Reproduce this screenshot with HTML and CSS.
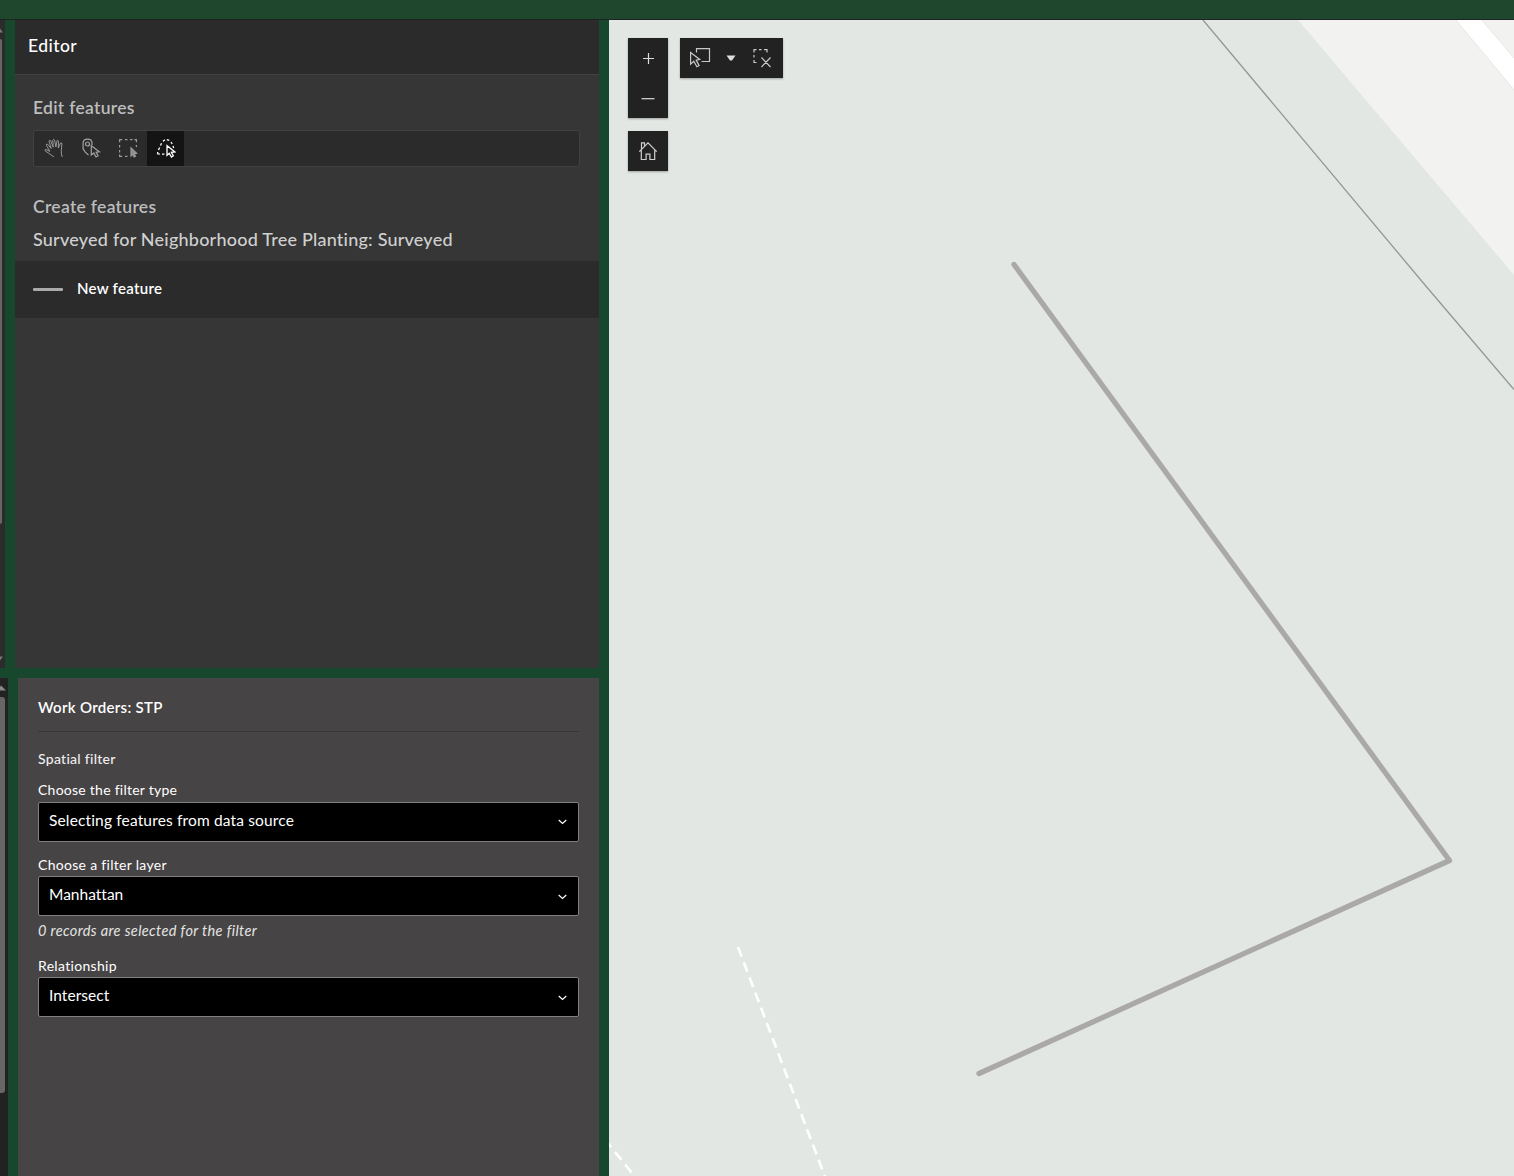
FILE: index.html
```html
<!DOCTYPE html>
<html lang="en">
<head>
<meta charset="utf-8">
<title>Editor</title>
<link rel="stylesheet" href="styles.css">
</head>
<body>
<header class="topbar"></header>
<main class="app">
  <div class="side">
    <div class="row row-top">
      <div class="strip strip-top">
        <svg class="strip-arrow" width="5" height="5" viewBox="0 0 5 5"><path d="M-3 4.500L0 .500L3 4.500z" fill="#777"/></svg>
        <div class="thumb thumb-top"></div>
        <svg class="strip-arrow strip-arrow-end" width="5" height="5" viewBox="0 0 5 5"><path d="M-3 .500L0 4.500L3 .500z" fill="#777"/></svg>
      </div>
      <section class="editor">
        <header class="editor-head"><h1 class="t t-editor">Editor</h1></header>
        <div class="editor-body">
          <h2 class="t t-edit">Edit features</h2>
          <div class="tools">
            <button class="tool" aria-label="Pan"><svg width="20" height="20" viewBox="0 0 20 20" fill="none" stroke="#a3a3a3" stroke-width=".9" stroke-linejoin="round" stroke-linecap="round"><path d="M10.700 18.700L7.900 16.800L2.100 12.800Q1.700 11.200 3.100 11.500L6.800 13.400L3.300 7.200Q3.300 5.600 4.700 6.300L8.200 10.500L6 3.200Q6.400 1.500 7.800 2.800L10.200 9.200L9.800 2.200Q10.600.600 11.600 2.100L12.900 9L14 2.800Q15 1.700 15.500 3.300L15.300 10L17.600 5Q19.200 4.500 18.900 6L18.300 12.500L18.400 16L19.200 18.600"/></svg></button>
            <button class="tool" aria-label="Select"><svg width="20" height="20" viewBox="0 0 20 20" fill="none" stroke="#a3a3a3" stroke-width="1.200"><path d="M7.500 17.200L4.100 13.800L2.100 10.800V4.600Q2.500 1.200 6.500 1.200Q10.800 1.200 11 5V7"/><circle cx="6.500" cy="6" r="2"/><path d="M10.300 7.800V17L12.800 15L15 19L17.100 17.800L15.100 14.200L18.400 13.800z"/></svg></button>
            <button class="tool" aria-label="Select by rectangle"><svg width="20" height="20" viewBox="0 0 20 20" fill="none" stroke="#999" stroke-width="1.200"><path d="M1.600 4.200V1.600H4.200M7 1.600H9.500M12 1.600H14.500M16.500 1.600H18.400V4.200M1.600 7V9.500M1.600 12V14.500M1.600 16.500V18.400H4.200M7 18.400H9.500M18.400 7V9"/><path d="M13 10V18L14.700 16.400L16.200 19L17.500 18.200L16 15.600L18.600 15.300z" fill="#8c8c8c"/></svg></button>
            <button class="tool tool-active" aria-label="Select by lasso"><svg width="20" height="20" viewBox="0 0 20 20" fill="none" stroke="#fff" stroke-width="1.300"><path d="M6.900 3.200L8.900 1.900M10.800 1.600L13.300 2.400M15 4L16.200 6M5.500 5.200L4.500 7.600M3.600 9.600L2.500 12M1.700 14L1.600 15.800L3.900 16.200M6 16.100H8.400M17 8L17.700 10"/><path d="M11 7.700V17.300L13.300 15.300L15.400 19L17.300 17.800L15.400 14.300L19 14z"/></svg></button>
          </div>
          <h2 class="t t-create">Create features</h2>
          <h3 class="t t-surveyed">Surveyed for Neighborhood Tree Planting: Surveyed</h3>
        </div>
        <div class="feature"><span class="feature-line"></span><span class="t t-new">New feature</span></div>
      </section>
    </div>
    <div class="row row-bottom">
      <div class="strip strip-bottom">
        <svg class="strip-arrow" width="6" height="6" viewBox="0 0 6 6"><path d="M-4 5.500L1 .500L6 5.500z" fill="#888"/></svg>
        <div class="thumb thumb-bottom"></div>
      </div>
      <section class="filter">
        <h2 class="t t-work">Work Orders: STP</h2>
        <h3 class="t t-spatial">Spatial filter</h3>
        <div class="t t-type">Choose the filter type</div>
        <div class="select"><span class="t t-selecting">Selecting features from data source</span><svg width="9" height="6" viewBox="0 0 9 6"><path d="M.700 1L4.500 4.400L8.300 1" fill="none" stroke="#fff" stroke-width="1.200"/></svg></div>
        <div class="t t-layer">Choose a filter layer</div>
        <div class="select"><span class="t t-manhattan">Manhattan</span><svg width="9" height="8" viewBox="0 0 9 8"><path d="M.700 3L4.500 6.400L8.300 3" fill="none" stroke="#fff" stroke-width="1.200"/></svg></div>
        <div class="t t-records">0 records are selected for the filter</div>
        <div class="t t-relation">Relationship</div>
        <div class="select"><span class="t t-intersect">Intersect</span><svg width="9" height="8" viewBox="0 0 9 8"><path d="M.700 3L4.500 6.400L8.300 3" fill="none" stroke="#fff" stroke-width="1.200"/></svg></div>
      </section>
    </div>
  </div>
  <section class="map">
    <svg class="map-canvas" viewBox="609 20 905 1156" fill="none">
      <path d="M1298 20H1514V275z" fill="#f2f2f0"/>
      <path d="M1455 19H1481L1515 59V91z" fill="#fff" stroke="#e6e6e4"/>
      <path d="M1203 20L1425 285L1514 389.500" stroke="#929896" stroke-width="1.300"/>
      <path d="M738 947L825.500 1178" stroke="#fff" stroke-width="2.600" stroke-dasharray="10.300 5.950"/>
      <path d="M607 1142L636 1178" stroke="#fff" stroke-width="2.600" stroke-dasharray="10.300 5.900" stroke-dashoffset="3.500"/>
      <path d="M1014 264.500L1449.500 860.500L979 1073.500" stroke="#aaa9a7" stroke-width="5.300" stroke-linecap="round" stroke-linejoin="round"/>
    </svg>
    <div class="controls">
      <div class="controls-col">
        <div class="control-box">
          <button class="control" aria-label="Zoom in"><svg width="16" height="16" viewBox="0 0 16 16" fill="none" stroke="#dcdcdc" stroke-width="1.200"><path d="M3 8.500H14M8.500 3V14"/></svg></button>
          <button class="control" aria-label="Zoom out"><svg width="16" height="16" viewBox="0 0 16 16" fill="none" stroke="#dcdcdc" stroke-width="1.200"><path d="M1.500 8.700H14.500"/></svg></button>
        </div>
        <div class="control-box">
          <button class="control" aria-label="Home"><svg width="20" height="20" viewBox="0 0 20 20" fill="none" stroke="#d0d0d0" stroke-width="1.200"><path d="M1.300 10.700L10 1.900L18.700 10.700M3.300 9.300V18.500H8.100V13.100H11.900V18.500H16.700V9.300M3.500 8V1.800H6.500V4.800"/></svg></button>
        </div>
      </div>
      <div class="control-box control-bar">
        <button class="bar-btn" aria-label="Select features"><svg width="22" height="22" viewBox="0 0 22 22" fill="none" stroke="#c8c8c8" stroke-width="1.200"><path d="M7.500 5.500V1.600H20.500V14.500H12.500"/><path d="M1.600 5.500V17.200L4.800 14.200L7.900 19.800L10.100 18.600L7.200 13.100L10.700 12.400z"/></svg></button>
        <button class="bar-btn bar-caret" aria-label="Selection options"><svg width="10" height="6" viewBox="0 0 10 6"><path d="M.500.500H9.500L6 5.400H4z" fill="#ddd"/></svg></button>
        <button class="bar-btn" aria-label="Clear selection"><svg width="20" height="20" viewBox="0 0 20 20" fill="none" stroke="#c8c8c8" stroke-width="1.200"><path d="M2 4.500V1.600H4.500M7 1.600H9.500M12 1.600H15V4.500M2 7V9.500M2 12V14.500H4.500M9.500 9.500L18.500 19M18.500 9.500L9.500 19"/></svg></button>
      </div>
    </div>
  </section>
</main>
</body>
</html>
```
FILE: styles.css
```css
* { box-sizing: border-box; margin: 0; padding: 0; }
body {
  height: 1176px;
  overflow: hidden;
  display: flex;
  flex-direction: column;
  background: #17472d;
  color: #fff;
  font-family: Lato, "Open Sans", sans-serif;
}
button { border: 0; background: none; display: flex; align-items: center; justify-content: center; }
svg { display: block; flex: none; }
.topbar { height: 20px; flex: none; background: #1f472d; border-bottom: 1px solid #1c2420; }
.app { flex: 1; display: flex; gap: 10px; min-height: 0; }
.side { width: 599px; flex: none; display: flex; flex-direction: column; gap: 10px; }
.row { display: flex; gap: 10px; }
.row-top { height: 648px; flex: none; }
.row-bottom { flex: 1; }

.strip { flex: none; display: flex; flex-direction: column; overflow: hidden; }
.strip-top { width: 5px; background: #2b2b2b; padding: 8px 0 7px; }
.strip-bottom { width: 8px; background: #222; padding-top: 7px; }
.strip-arrow-end { margin-top: auto; }
.thumb { background: #686664; }
.thumb-top { width: 2px; height: 485px; margin-top: 6px; border-radius: 0 2px 2px 0; }
.thumb-bottom { width: 5px; height: 396px; margin-top: 6px; border-radius: 0 3px 3px 0; }

.t { display: block; white-space: nowrap; font-weight: 400; font-variant-ligatures: none; }
.editor { flex: 1; background: #363636; }
.editor-head { height: 55px; padding: 14px 13px; background: #2b2b2b; border-bottom: 1px solid #424242; }
.editor-body { height: 186px; padding: 21px 19px 0 18px; }
.editor-head .t-editor { font-size: 17.500px; line-height: 24px; font-weight: 500; letter-spacing: .45px; }
.editor-body .t-edit, .editor-body .t-create { font-size: 17.500px; line-height: 24px; font-weight: 600; letter-spacing: .3px; color: #bdbdbd; }
.tools { display: flex; height: 37px; margin: 10px 0 28px; background: #2b2b2b; border: 1px solid #414141; border-radius: 3px; }
.tool { width: 37.500px; height: 35px; padding: 0 0 1px 1px; }
.tool-active { background: #141414; }
.editor-body .t-surveyed { font-size: 18px; line-height: 24px; margin-top: 8px; color: #d0d0d0; font-weight: 500; letter-spacing: .22px; }
.feature { height: 57px; display: flex; align-items: center; gap: 14px; padding: 0 18px; background: #2b2b2b; }
.feature-line { width: 30px; height: 2.500px; border-radius: 1px; background: #aaa; }
.feature .t-new { font-size: 15px; line-height: 20px; padding-bottom: 3px; font-weight: 600; letter-spacing: .28px; }

.filter { flex: 1; padding: 19px 20px 0; background: #474445; }
.filter .t-work { font-size: 15px; line-height: 20px; height: 35px; font-weight: 600; letter-spacing: .3px; border-bottom: 1px solid #383637; }
.filter .t-spatial { font-size: 14px; line-height: 20px; margin-top: 17px; font-weight: 500; letter-spacing: .27px; color: #eee; }
.t-type { font-size: 14px; line-height: 20px; margin: 11px 0 2px; letter-spacing: .25px; }
.select { height: 40px; width: 541px; display: flex; align-items: center; justify-content: space-between; padding: 0 11px 0 10px; background: #000; border: 1px solid #828081; border-radius: 2px; }
.t-selecting, .t-manhattan, .t-intersect { font-size: 15.500px; line-height: 20px; padding-bottom: 4px; }
.t-selecting { letter-spacing: .15px; }
.t-intersect { letter-spacing: .04px; }
.t-layer { font-size: 14px; line-height: 20px; margin: 13px 0 1px; letter-spacing: .3px; }
.t-records { font-size: 14.500px; line-height: 20px; margin-top: 5px; font-style: italic; letter-spacing: .38px; color: #e4e4e4; }
.t-relation { font-size: 14px; line-height: 20px; margin: 15px 0 1px; letter-spacing: .32px; }

.map { flex: 1; display: grid; background: #e2e7e3; }
.map-canvas { grid-area: 1 / 1; width: 905px; height: 1156px; }
.controls { grid-area: 1 / 1; z-index: 1; display: flex; align-items: flex-start; gap: 12px; padding: 18px 19px; }
.controls-col { display: flex; flex-direction: column; gap: 13px; }
.control-box { background: #222; box-shadow: 0 1px 2px rgba(0, 0, 0, .3); }
.control { width: 40px; height: 40px; }
.control-bar { display: flex; height: 40px; padding: 0 11px 0 9px; justify-content: space-between; width: 103px; }
.bar-caret { padding-right: 2px; }
```
